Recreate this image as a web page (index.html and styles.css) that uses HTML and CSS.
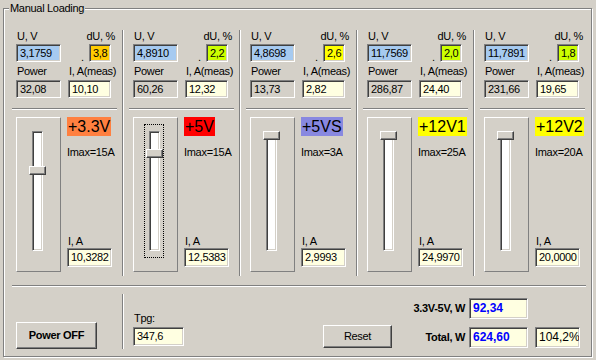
FILE: index.html
```html
<!DOCTYPE html>
<html>
<head>
  <title>Manual Loading</title>
  <link rel="stylesheet" href="styles.css">
</head>
<body>
  <fieldset class="group">
    <legend>Manual Loading</legend>

    <div class="cols">
      <div class="col">
        <div class="lbl"><span>U, V</span><span>dU, %</span></div>
        <div class="fields"><div class="fld u">3,1759</div><span class="dot">.</span><div class="fld du orange">3,8</div></div>
        <div class="lbl2"><span>Power</span><span>I, A(meas)</span></div>
        <div class="fields2"><div class="fld p">32,08</div><div class="fld ia">10,10</div></div>
        <div class="sep"></div>
        <div class="load">
          <div class="slider"><div class="frame"><div class="track"><div class="thumb" style="top: 34px"></div></div></div></div>
          <div class="info">
            <span class="tag orange-tag">+3.3V</span>
            <span class="imax">Imax=15A</span>
            <span class="ia-lbl">I, A</span>
            <div class="fld cur">10,3282</div>
          </div>
        </div>
      </div>

      <div class="col">
        <div class="lbl"><span>U, V</span><span>dU, %</span></div>
        <div class="fields"><div class="fld u">4,8910</div><span class="dot">.</span><div class="fld du green">2,2</div></div>
        <div class="lbl2"><span>Power</span><span>I, A(meas)</span></div>
        <div class="fields2"><div class="fld p">60,26</div><div class="fld ia">12,32</div></div>
        <div class="sep"></div>
        <div class="load">
          <div class="slider"><div class="frame focus"><div class="track"><div class="thumb" style="top: 17px"></div></div></div></div>
          <div class="info">
            <span class="tag red-tag">+5V</span>
            <span class="imax">Imax=15A</span>
            <span class="ia-lbl">I, A</span>
            <div class="fld cur">12,5383</div>
          </div>
        </div>
      </div>

      <div class="col">
        <div class="lbl"><span>U, V</span><span>dU, %</span></div>
        <div class="fields"><div class="fld u">4,8698</div><span class="dot">.</span><div class="fld du yellow">2,6</div></div>
        <div class="lbl2"><span>Power</span><span>I, A(meas)</span></div>
        <div class="fields2"><div class="fld p">13,73</div><div class="fld ia">2,82</div></div>
        <div class="sep"></div>
        <div class="load">
          <div class="slider"><div class="frame"><div class="track"><div class="thumb" style="top: -1px"></div></div></div></div>
          <div class="info">
            <span class="tag blue-tag">+5VS</span>
            <span class="imax">Imax=3A</span>
            <span class="ia-lbl">I, A</span>
            <div class="fld cur">2,9993</div>
          </div>
        </div>
      </div>

      <div class="col">
        <div class="lbl"><span>U, V</span><span>dU, %</span></div>
        <div class="fields"><div class="fld u">11,7569</div><span class="dot">.</span><div class="fld du green">2,0</div></div>
        <div class="lbl2"><span>Power</span><span>I, A(meas)</span></div>
        <div class="fields2"><div class="fld p">286,87</div><div class="fld ia">24,40</div></div>
        <div class="sep"></div>
        <div class="load">
          <div class="slider"><div class="frame"><div class="track"><div class="thumb" style="top: -1px"></div></div></div></div>
          <div class="info">
            <span class="tag yellow-tag">+12V1</span>
            <span class="imax">Imax=25A</span>
            <span class="ia-lbl">I, A</span>
            <div class="fld cur">24,9970</div>
          </div>
        </div>
      </div>

      <div class="col">
        <div class="lbl"><span>U, V</span><span>dU, %</span></div>
        <div class="fields"><div class="fld u">11,7891</div><span class="dot">.</span><div class="fld du green">1,8</div></div>
        <div class="lbl2"><span>Power</span><span>I, A(meas)</span></div>
        <div class="fields2"><div class="fld p">231,66</div><div class="fld ia">19,65</div></div>
        <div class="sep"></div>
        <div class="load">
          <div class="slider"><div class="frame"><div class="track"><div class="thumb" style="top: -1px"></div></div></div></div>
          <div class="info">
            <span class="tag yellow-tag">+12V2</span>
            <span class="imax">Imax=20A</span>
            <span class="ia-lbl">I, A</span>
            <div class="fld cur">20,0000</div>
          </div>
        </div>
      </div>
    </div>

    <div class="hsep"></div>

    <div class="bottom">
      <div class="off"><div class="btn power">Power OFF</div></div>
      <div class="tpg">
        <div>Tpg:</div>
        <div class="fld">347,6</div>
      </div>
      <div class="btn reset">Reset</div>
      <div class="totals">
        <span class="tl">3.3V-5V, W</span>
        <div class="fld sum">92,34</div>
        <span></span>
        <span class="tl">Total, W</span>
        <div class="fld sum">624,60</div>
        <div class="fld pct">104,2%</div>
      </div>
    </div>
  </fieldset>
</body>
</html>
```

FILE: styles.css
```css
body {
  margin: 0;
  width: 596px;
  height: 360px;
  overflow: hidden;
  background-color: #d4d0c8;
  font: 11px/13px "Liberation Sans", Arial, sans-serif;
  letter-spacing: -0.3px;
  color: #000;
}

.group {
  box-sizing: border-box;
  width: 589px;
  height: 355px;
  min-width: 0;
  margin: 2px 0 0 3px;
  padding: 0;
  border: 1px solid #808080;
  box-shadow: inset 1px 1px #fff, 1px 1px #fff;
}

.group legend {
  margin-left: 5px;
  padding: 0 1px;
  line-height: 13px;
  background-color: #d4d0c8;
}

/* sunken edit box */
.fld {
  box-sizing: border-box;
  height: 18px;
  padding-left: 3px;
  border: 1px solid;
  border-color: #808080 #fff #fff #808080;
  box-shadow: inset 1px 1px #404040, inset -1px -1px #d4d0c8;
  background-color: #ffffe1;
  line-height: 16px;
  white-space: nowrap;
  overflow: hidden;
}

.cols {
  display: grid;
  grid-template-columns: repeat(4, 117px) 1fr;
  margin: 15px 0 0 3px;
}

.col {
  box-sizing: border-box;
  height: 246px;
  padding-left: 9px;
  border-right: 1px solid #fff;
  box-shadow: inset -1px 0 #808080;
}

.col:last-child {
  border-right: none;
  box-shadow: none;
}

.lbl {
  display: flex;
  justify-content: space-between;
  width: 99px;
  padding-left: 1px;
  box-sizing: border-box;
}

.fields {
  display: flex;
  margin-top: 1px;
}

.fld.u {
  width: 45px;
  background-color: #a6caf0;
}

.dot {
  align-self: flex-end;
  width: 28px;
  padding-left: 20px;
  box-sizing: border-box;
  margin-bottom: -2px;
}

.fld.du {
  width: 22px;
}

.orange { background-color: #ffcc00 !important; }
.green { background-color: #ccff00 !important; }
.yellow { background-color: #ffff00 !important; }

.lbl2 {
  display: grid;
  grid-template-columns: 52px auto;
  margin-top: 3px;
  padding-left: 1px;
}

.fields2 {
  display: flex;
  gap: 7px;
  margin-top: 2px;
}

.fld.p {
  width: 45px;
  background-color: #d4d0c8;
}

.fld.ia {
  width: 43px;
}

.sep {
  width: 105px;
  margin: 10px 0 0 -4px;
  border-top: 1px solid #808080;
  border-bottom: 1px solid #fff;
}

.load {
  display: flex;
  height: 155px;
  margin-top: 7px;
}

.slider {
  box-sizing: border-box;
  width: 45px;
  height: 155px;
  padding: 6px 0 0 10px;
  border: 1px solid;
  border-color: #fff #808080 #808080 #fff;
}

.frame {
  box-sizing: border-box;
  width: 20px;
  height: 134px;
  padding: 6px 0 0 4px;
  border: 1px dotted transparent;
}

.frame.focus {
  border-color: #000;
}

.track {
  position: relative;
  box-sizing: border-box;
  width: 11px;
  height: 120px;
  border: 1px solid;
  border-color: #808080 #fff #fff #808080;
  box-shadow: inset 1px 1px #404040, inset -1px -1px #d4d0c8;
  background-color: #fff;
}

.thumb {
  position: absolute;
  left: -4px;
  box-sizing: border-box;
  width: 17px;
  height: 9px;
  border: 1px solid;
  border-color: #fff #404040 #404040 #fff;
  box-shadow: inset -1px -1px #808080;
  background-color: #d4d0c8;
}

.info {
  display: flex;
  flex-direction: column;
  align-items: flex-start;
  margin-left: 6px;
}

.tag {
  padding: 0 1px;
  font-size: 16px;
  line-height: 19px;
  letter-spacing: 0;
}

.orange-tag { background-color: #ff8040; }
.red-tag { background-color: #ff0000; }
.blue-tag { background-color: #8888e0; }
.yellow-tag { background-color: #ffff00; }

.imax {
  margin-top: 10px;
}

.ia-lbl {
  margin-top: auto;
  padding-left: 1px;
}

.fld.cur {
  width: 45px;
  height: 19px;
  margin-bottom: 5px;
  line-height: 17px;
}

.hsep {
  margin: 9px 5px 0 8px;
  border-top: 1px solid #808080;
  border-bottom: 1px solid #fff;
}

.bottom {
  display: flex;
  align-items: flex-end;
  height: 62px;
}

.btn {
  box-sizing: border-box;
  display: flex;
  align-items: center;
  justify-content: center;
  border: 1px solid;
  border-color: #fff #404040 #404040 #fff;
  box-shadow: inset -1px -1px #808080;
  background-color: #d4d0c8;
}

.off {
  box-sizing: border-box;
  display: flex;
  align-items: flex-end;
  width: 117px;
  height: 55px;
  margin-left: 3px;
  padding-left: 9px;
  border-right: 1px solid #fff;
  box-shadow: inset -1px 0 #808080;
}

.btn.power {
  width: 81px;
  height: 27px;
  font-weight: bold;
}

.tpg {
  margin: 0 0 3px 9px;
}

.tpg div:first-child {
  padding-left: 1px;
}

.tpg .fld {
  width: 51px;
  height: 19px;
  margin-top: 2px;
  line-height: 17px;
}

.btn.reset {
  width: 69px;
  height: 23px;
  margin: 0 0 1px 139px;
}

.totals {
  display: grid;
  grid-template-columns: 69px 59px 52px;
  grid-auto-rows: 21px;
  row-gap: 8px;
  align-items: center;
  margin: 0 0 1px 8px;
}

.tl {
  padding-right: 4px;
  text-align: right;
  font-weight: bold;
}

.fld.sum {
  height: 21px;
  color: #0000ff;
  font-weight: bold;
  font-size: 12px;
  line-height: 19px;
  letter-spacing: 0;
}

.fld.pct {
  width: 45px;
  height: 21px;
  margin-left: 7px;
  font-size: 12px;
  line-height: 19px;
  letter-spacing: 0;
}
```
